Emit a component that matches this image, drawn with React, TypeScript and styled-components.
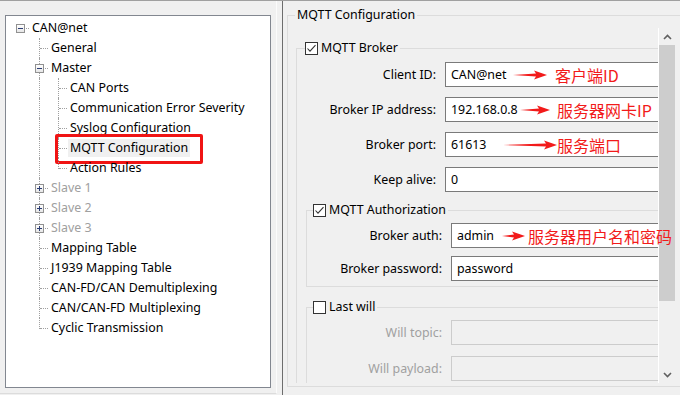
import React from 'react';
import styled, { createGlobalStyle } from 'styled-components';

const GlobalStyle = createGlobalStyle`
	html,
	body {
		margin: 0;
		padding: 0;
		background: #f0f0f0;
	}

	body {
		font-family: 'Noto Sans', 'Noto Sans CJK SC', sans-serif;
		font-size: 12.4px;
		color: #000;
	}
`;

interface ITreeItem {
	label: string;
	level: number;
	expander?: 'minus' | 'plus';
	disabled?: boolean;
	selected?: boolean;
}

const treeItems: ITreeItem[] = [
	{ label: 'CAN@net', level: 0, expander: 'minus' },
	{ label: 'General', level: 1 },
	{ label: 'Master', level: 1, expander: 'minus' },
	{ label: 'CAN Ports', level: 2 },
	{ label: 'Communication Error Severity', level: 2 },
	{ label: 'Syslog Configuration', level: 2 },
	{ label: 'MQTT Configuration', level: 2, selected: true },
	{ label: 'Action Rules', level: 2 },
	{ label: 'Slave 1', level: 1, expander: 'plus', disabled: true },
	{ label: 'Slave 2', level: 1, expander: 'plus', disabled: true },
	{ label: 'Slave 3', level: 1, expander: 'plus', disabled: true },
	{ label: 'Mapping Table', level: 1 },
	{ label: 'J1939 Mapping Table', level: 1 },
	{ label: 'CAN-FD/CAN Demultiplexing', level: 1 },
	{ label: 'CAN/CAN-FD Multiplexing', level: 1 },
	{ label: 'Cyclic Transmission', level: 1 },
];

// does the item at index i have a sibling below it
const hasNextSibling = (i: number) => {
	const level = treeItems[i].level;
	for (let j = i + 1; j < treeItems.length; j++) {
		if (treeItems[j].level < level) return false;
		if (treeItems[j].level === level) return true;
	}
	return false;
};

const ancestorIndex = (i: number, level: number) => {
	for (let j = i - 1; j >= 0; j--) {
		if (treeItems[j].level === level) return j;
	}
	return -1;
};

const Arrow = ({ width }: { width: number }) => (
	<svg width={width} height={10} viewBox={`0 0 ${width} 10`}>
		<polygon
			points={`0,5 ${width - 11},3.5 ${width - 13},0.5 ${width},5 ${width - 13},9.5 ${width - 11},6.5`}
			fill='#f21a1a'
		/>
	</svg>
);

const Check = () => (
	<svg width={11} height={11} viewBox='0 0 11 11'>
		<polyline points='1.5,5.5 4,8.2 9.5,2.2' fill='none' stroke='#333' strokeWidth={1.1} />
	</svg>
);

const Chevron = ({ up }: { up?: boolean }) => (
	<svg width={9} height={6} viewBox='0 0 9 6'>
		<polyline
			points={up ? '1,5 4.5,1.5 8,5' : '1,1 4.5,4.5 8,1'}
			fill='none'
			stroke='#606060'
			strokeWidth={1.6}
		/>
	</svg>
);

interface INote {
	left: number;
	arrow: number;
	gap: number;
	text: string;
}

interface IFieldProps {
	label: string;
	labelWidth: number;
	value?: string;
	disabled?: boolean;
	note?: INote;
}

// the input runs on under the scroll bar, so it takes the rest of the row
const Field = ({ label, labelWidth, value, disabled, note }: IFieldProps) => (
	<FieldRow>
		<FieldLabel $width={labelWidth} $disabled={disabled}>
			{label}
		</FieldLabel>
		<Input $disabled={disabled}>
			{value}
			{note && (
				<Note $left={note.left} $gap={note.gap}>
					<Arrow width={note.arrow} />
					<span>{note.text}</span>
				</Note>
			)}
		</Input>
	</FieldRow>
);

const App = () => {
	return (
		<Window>
			<GlobalStyle />
			<LeftPanel>
				<TreeBox>
					{treeItems.map((item, i) => {
						const guides = [];
						for (let k = 0; k < item.level; k++) {
							const anc = ancestorIndex(i, k);
							const line = k > 0 && anc >= 0 && hasNextSibling(anc);
							guides.push(<Cell key={k} $up={line} $down={line} />);
						}
						const isChild = item.level > 0;
						return (
							<TreeRow key={item.label}>
								{guides}
								<Cell $up={isChild} $down={isChild && hasNextSibling(i)} $right>
									{item.expander && (
										<Expander>
											<Sign />
											{item.expander === 'plus' && <SignV />}
										</Expander>
									)}
								</Cell>
								<TreeLabel $disabled={item.disabled} $selected={item.selected}>
									{item.label}
									{item.selected && <RedBox />}
								</TreeLabel>
							</TreeRow>
						);
					})}
				</TreeBox>
			</LeftPanel>

			<RightPanel>
				<ConfigGroup>
					<ConfigLegend>MQTT Configuration</ConfigLegend>
					<ScrollArea>
						<Viewport>
							<BrokerGroup>
								<CheckLegend $offset={8}>
									<CheckBox>
										<Check />
									</CheckBox>
									MQTT Broker
								</CheckLegend>
								<Fields $gap={10}>
									<Field
										label='Client ID:'
										labelWidth={139}
										value='CAN@net'
										note={{ left: 67, arrow: 34, gap: 8, text: '客户端ID' }}
									/>
									<Field
										label='Broker IP address:'
										labelWidth={139}
										value='192.168.0.8'
										note={{ left: 74, arrow: 30, gap: 7, text: '服务器网卡IP' }}
									/>
									<Field
										label='Broker port:'
										labelWidth={139}
										value='61613'
										note={{ left: 57, arrow: 54, gap: 0, text: '服务端口' }}
									/>
									<Field label='Keep alive:' labelWidth={139} value='0' />
								</Fields>

								<SubGroup $top={9} $bottom={5}>
									<CheckLegend $offset={6}>
										<CheckBox>
											<Check />
										</CheckBox>
										MQTT Authorization
									</CheckLegend>
									<Fields $gap={8}>
										<Field
											label='Broker auth:'
											labelWidth={135}
											value='admin'
											note={{ left: 50, arrow: 23, gap: 3, text: '服务器用户名和密码' }}
										/>
										<Field label='Broker password:' labelWidth={135} value='password' />
									</Fields>
								</SubGroup>

								<SubGroup $top={11} $bottom={20}>
									<CheckLegend $offset={6}>
										<CheckBox />
										Last will
									</CheckLegend>
									<Fields $gap={11}>
										<Field label='Will topic:' labelWidth={135} disabled />
										<Field label='Will payload:' labelWidth={135} disabled />
									</Fields>
								</SubGroup>
							</BrokerGroup>
						</Viewport>

						<ScrollBar>
							<ScrollButton>
								<Chevron up />
							</ScrollButton>
							<ScrollTrack>
								<ScrollThumb />
							</ScrollTrack>
							<ScrollButton>
								<Chevron />
							</ScrollButton>
						</ScrollBar>
					</ScrollArea>
				</ConfigGroup>
			</RightPanel>
		</Window>
	);
};

export default App;

const Window = styled.div`
	display: flex;

	width: 680px;
	height: 395px;
	overflow: hidden;
	box-sizing: border-box;

	border-top: 1px solid #a0a0a0;
	background: #f0f0f0;
`;

const LeftPanel = styled.div`
	flex-shrink: 0;

	width: 277px;
	height: 393px;
	padding: 14px 0 0 5px;
	box-sizing: border-box;

	border-right: 1px solid #fbfbfb;
	border-bottom: 1px solid #dcdcdc;
`;

const TreeBox = styled.div`
	width: 266px;
	height: 373px;
	padding: 2px 0 0 5px;
	box-sizing: border-box;

	border: 1px solid #828790;
	background: #fff;
`;

const TreeRow = styled.div`
	display: flex;
	align-items: center;

	height: 20px;
`;

const Cell = styled.div<{ $up?: boolean; $down?: boolean; $right?: boolean }>`
	position: relative;
	flex-shrink: 0;

	width: 19px;
	height: 20px;

	&::before {
		content: '';
		display: ${(p) => (p.$up ? 'block' : 'none')};
		position: absolute;
		left: 9px;
		top: 0;
		height: ${(p) => (p.$down ? '20px' : '11px')};
		border-left: 1px dotted #a0a0a0;
	}

	&::after {
		content: '';
		display: ${(p) => (p.$right ? 'block' : 'none')};
		position: absolute;
		left: 10px;
		right: 1px;
		top: 10px;
		border-top: 1px dotted #a0a0a0;
	}
`;

const Expander = styled.div`
	position: absolute;
	left: 5px;
	top: 6px;
	z-index: 1;

	width: 9px;
	height: 9px;
	box-sizing: border-box;

	border: 1px solid #919191;
	background: linear-gradient(#fff, #e6e6e6);
`;

const Sign = styled.div`
	position: absolute;
	left: 1px;
	top: 3px;

	width: 5px;
	height: 1px;
	background: #2b3d74;
`;

const SignV = styled.div`
	position: absolute;
	left: 3px;
	top: 1px;

	width: 1px;
	height: 5px;
	background: #2b3d74;
`;

const TreeLabel = styled.span<{ $disabled?: boolean; $selected?: boolean }>`
	position: relative;

	padding: 0 2px;
	line-height: 18px;
	white-space: nowrap;

	color: ${(p) => (p.$disabled ? '#a0a0a0' : '#000')};
	background: ${(p) => (p.$selected ? '#f0f0f0' : 'transparent')};
`;

const RedBox = styled.div`
	position: absolute;
	top: -5px;
	bottom: -7px;
	left: -13px;
	right: -13px;

	border: 3px solid #f01414;
	border-radius: 2px;
`;

const RightPanel = styled.div`
	display: flex;
	align-items: flex-start;

	flex: 1;
	min-width: 0;
	margin-left: 5px;
	overflow: hidden;

	border-left: 1px solid #6d6d6d;
`;

const ConfigGroup = styled.fieldset`
	flex-shrink: 0;

	width: 402px;
	min-width: 0;
	margin: 5px 0 0 4px;
	padding: 4px 13px 3px 0;
	box-sizing: border-box;

	border: 1px solid #dcdcdc;
`;

const ConfigLegend = styled.legend`
	margin-left: 7px;
	padding: 0 2px;
	line-height: 18px;
`;

const ScrollArea = styled.div`
	display: flex;

	height: 355px;
`;

const Viewport = styled.div`
	flex: 1;
	min-width: 0;
	overflow-x: visible;
	overflow-y: clip;
`;

const BrokerGroup = styled.fieldset`
	min-width: 0;
	margin: 11px 0 0 8px;
	padding: 5px 0 0 0;

	border: 1px solid #dcdcdc;
	border-right: none;
`;

const SubGroup = styled.fieldset<{ $top: number; $bottom: number }>`
	min-width: 0;
	margin: ${(p) => p.$top}px 0 0 9px;
	padding: 4px 0 ${(p) => p.$bottom}px 0;

	border: 1px solid #dcdcdc;
	border-right: none;
`;

const CheckLegend = styled.legend<{ $offset: number }>`
	display: flex;
	align-items: center;
	gap: 3px;

	margin-left: ${(p) => p.$offset}px;
	padding: 0 2px 0 0;
	line-height: 18px;
`;

const CheckBox = styled.span`
	display: flex;
	align-items: center;
	justify-content: center;

	width: 13px;
	height: 13px;
	box-sizing: border-box;

	border: 1px solid #333;
	background: #fff;
`;

const Fields = styled.div<{ $gap: number }>`
	display: flex;
	flex-direction: column;
	gap: ${(p) => p.$gap}px;
`;

const FieldRow = styled.div`
	display: flex;
	align-items: center;

	height: 25px;
`;

const FieldLabel = styled.span<{ $width: number; $disabled?: boolean }>`
	flex-shrink: 0;

	width: ${(p) => p.$width}px;
	margin-right: 9px;
	text-align: right;
	white-space: nowrap;

	color: ${(p) => (p.$disabled ? '#a0a0a0' : '#000')};
`;

const Input = styled.div<{ $disabled?: boolean }>`
	position: relative;
	display: flex;
	align-items: center;
	flex: 1;

	height: 25px;
	padding-left: 5px;
	box-sizing: border-box;

	border: 1px solid ${(p) => (p.$disabled ? '#cccccc' : '#7a7a7a')};
	border-right: none;
	background: ${(p) => (p.$disabled ? '#f0f0f0' : '#fff')};
`;

const Note = styled.div<{ $left: number; $gap: number }>`
	position: absolute;
	left: ${(p) => p.$left}px;
	top: 0;
	bottom: 0;
	z-index: 2;

	display: flex;
	align-items: center;
	gap: ${(p) => p.$gap}px;

	font-family: 'Noto Sans CJK SC', 'Noto Sans', sans-serif;
	font-size: 16px;
	white-space: nowrap;
	color: #f21a1a;

	> svg {
		flex-shrink: 0;
	}
`;

const ScrollBar = styled.div`
	display: flex;
	flex-direction: column;
	flex-shrink: 0;

	width: 17px;
	border-left: 1px solid #fff;
	box-sizing: border-box;
	background: #f0f0f0;
`;

const ScrollButton = styled.div`
	display: flex;
	align-items: center;
	justify-content: center;

	height: 17px;
`;

const ScrollTrack = styled.div`
	flex: 1;
`;

const ScrollThumb = styled.div`
	height: 256px;
	background: #cdcdcd;
`;
